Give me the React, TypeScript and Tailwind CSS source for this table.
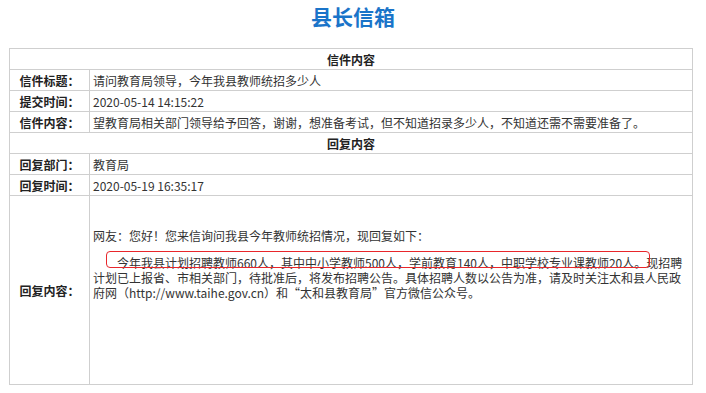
import React from 'react';

const rows1 = [
    { label: '信件标题：', value: '请问教育局领导，今年我县教师统招多少人' },
    { label: '提交时间：', value: '2020-05-14 14:15:22' },
    { label: '信件内容：', value: '望教育局相关部门领导给予回答，谢谢，想准备考试，但不知道招录多少人，不知道还需不需要准备了。' },
];

const rows2 = [
    { label: '回复部门：', value: '教育局' },
    { label: '回复时间：', value: '2020-05-19 16:35:17' },
];

function Row({ label, value }: { label: string; value: string }) {
    return (
        <tr className="h-[21px]">
            <td className="border border-[#cfcfcf] p-0 text-center font-bold text-[#222]">{label}</td>
            <td className="whitespace-nowrap border border-[#cfcfcf] py-0 pl-[3px] pr-1 text-[#333]">{value}</td>
        </tr>
    );
}

function Header({ text }: { text: string }) {
    return (
        <tr className="h-[21px]">
            <td colSpan={2} className="border border-[#cfcfcf] p-0 text-center font-bold text-[#222]">{text}</td>
        </tr>
    );
}

export default function App() {
    return (
        <div
            className="min-h-[393px] w-[706px] bg-white text-[12px] leading-[15px]"
            style={{ fontFamily: '"Noto Sans CJK SC", "Liberation Sans", sans-serif' }}
        >
            <h1 className="pt-[3px] text-center text-[21px] font-bold leading-[26px] text-[#1a74c9]">县长信箱</h1>
            <table className="ml-[9px] mt-[19px] w-[684px] table-fixed border-collapse">
                <colgroup>
                    <col className="w-[80px]" />
                    <col />
                </colgroup>
                <tbody>
                    <Header text="信件内容" />
                    {rows1.map((r) => (
                        <Row key={r.label} label={r.label} value={r.value} />
                    ))}
                    <Header text="回复内容" />
                    {rows2.map((r) => (
                        <Row key={r.label} label={r.label} value={r.value} />
                    ))}
                    <tr className="h-[189px]">
                        <td className="border border-[#cfcfcf] p-0 text-center font-bold text-[#222]">回复内容：</td>
                        <td className="border border-[#cfcfcf] py-0 pl-[3px] pr-1 align-top text-[#333]">
                            <div className="relative whitespace-nowrap pt-[32px]">
                                <p>网友：您好！您来信询问我县今年教师统招情况，现回复如下：</p>
                                <p className="mt-[12px]">
                                    {'\u3000\u3000'}今年我县计划招聘教师660人，其中中小学教师500人，学前教育140人，中职学校专业课教师20人。现招聘
                                    <br />
                                    计划已上报省、市相关部门，待批准后，将发布招聘公告。具体招聘人数以公告为准，请及时关注太和县人民政
                                    <br />
                                    府网（http://www.taihe.gov.cn）和“太和县教育局”官方微信公众号。
                                </p>
                                <div className="absolute left-[13px] top-[55px] h-[17px] w-[544px] rounded-[4px] border border-[#e8262b]" />
                            </div>
                        </td>
                    </tr>
                </tbody>
            </table>
        </div>
    );
}
